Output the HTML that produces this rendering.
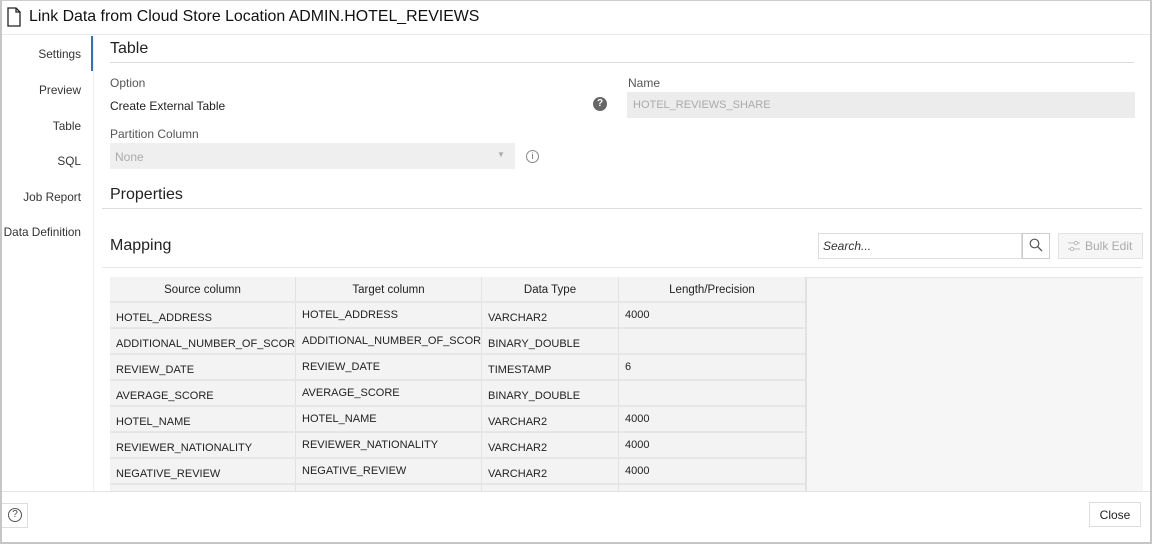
<!DOCTYPE html>
<html><head><style>
*{box-sizing:border-box;margin:0;padding:0}
body{width:1152px;height:544px;overflow:hidden;background:#fff;font-family:"Liberation Sans",sans-serif;color:#222;position:relative}
.frame{position:absolute;left:0;top:0;width:1152px;height:544px;border:2px solid #c6c6c6;border-top:1px solid #ccc}
.abs{position:absolute;white-space:nowrap}
.nav{font-size:11.8px;color:#333;text-align:right;width:81px;left:0}
.lbl{font-size:12px;color:#555}
.h{font-size:16px;color:#222}
.cell{position:absolute;background:#f3f3f3;border-right:1px solid #e2e2e2;border-bottom:2px solid #e6e6e6;font-size:11px;color:#222;padding:9px 6px 0 6px;overflow:hidden;white-space:nowrap}
.hd{text-align:center;padding-top:7px;font-size:11.5px}
#grid{position:absolute;left:0;top:0;width:1152px;height:491px;overflow:hidden}
</style></head><body>
<div class="frame"></div>
<svg class="abs" style="left:7px;top:7px" width="14" height="20" viewBox="0 0 14 20"><path d="M1 1h8l4 4v14H1z M9 1v4h4" fill="none" stroke="#222" stroke-width="1.3"/></svg>
<div class="abs" style="left:29px;top:8px;font-size:15.9px;color:#111">Link Data from Cloud Store Location ADMIN.HOTEL_REVIEWS</div>
<div class="abs" style="left:2px;top:34px;width:1148px;height:1px;background:#e8e8e8"></div>

<div class="abs nav" style="top:47px">Settings</div>
<div class="abs nav" style="top:83px">Preview</div>
<div class="abs nav" style="top:119px">Table</div>
<div class="abs nav" style="top:154px">SQL</div>
<div class="abs nav" style="top:190px">Job Report</div>
<div class="abs nav" style="top:225px">Data Definition</div>
<div class="abs" style="left:91px;top:36px;width:2px;height:35px;background:#3a6fb0"></div>
<div class="abs" style="left:93px;top:36px;width:1px;height:455px;background:#eee"></div>

<div class="abs h" style="left:110px;top:40px">Table</div>
<div class="abs" style="left:110px;top:62px;width:1024px;height:1px;background:#ddd"></div>
<div class="abs lbl" style="left:110px;top:76px">Option</div>
<div class="abs" style="left:110px;top:99px;font-size:12px">Create External Table</div>
<div class="abs lbl" style="left:110px;top:127px">Partition Column</div>
<div class="abs" style="left:110px;top:143px;width:405px;height:26px;background:#efefef"></div>
<div class="abs" style="left:115px;top:150px;font-size:12px;color:#aaa">None</div>
<div class="abs" style="left:497px;top:150px;font-size:8px;color:#aaa">▼</div>
<div class="abs" style="left:526px;top:150px;width:13px;height:13px;border:1px solid #888;border-radius:50%;font-size:9px;text-align:center;line-height:11px;color:#666">i</div>
<div class="abs" style="left:593px;top:97px;width:14px;height:14px;background:#666;border-radius:50%;font-size:10px;font-weight:bold;text-align:center;line-height:14px;color:#fff">?</div>
<div class="abs lbl" style="left:628px;top:76px">Name</div>
<div class="abs" style="left:627px;top:92px;width:508px;height:26px;background:#ececec"></div>
<div class="abs" style="left:633px;top:99px;font-size:11px;color:#aaa">HOTEL_REVIEWS_SHARE</div>

<div class="abs h" style="left:110px;top:186px">Properties</div>
<div class="abs" style="left:102px;top:208px;width:1040px;height:1px;background:#ddd"></div>
<div class="abs h" style="left:110px;top:237px">Mapping</div>
<div class="abs" style="left:102px;top:267px;width:1040px;height:1px;background:#e6e6e6"></div>
<div class="abs" style="left:818px;top:233px;width:204px;height:26px;border:1px solid #ddd;background:#fff"></div>
<div class="abs" style="left:823px;top:239px;font-size:12px;font-style:italic;color:#333">Search...</div>
<div class="abs" style="left:1022px;top:233px;width:28px;height:26px;border:1px solid #ccc;background:#fff"></div>
<svg class="abs" style="left:1029px;top:238px" width="14" height="14" viewBox="0 0 14 14"><circle cx="5.5" cy="5.5" r="4.3" fill="none" stroke="#555" stroke-width="1.2"/><path d="M8.7 8.7L13 13" stroke="#555" stroke-width="1.3"/></svg>
<div class="abs" style="left:1058px;top:233px;width:85px;height:26px;border:1px solid #e2e2e2;background:#f6f6f6"></div>
<svg class="abs" style="left:1067px;top:240px" width="14" height="12" viewBox="0 0 14 12"><path d="M1 3h12M1 9h12" stroke="#bbb"/><circle cx="9" cy="3" r="1.6" fill="#fff" stroke="#bbb"/><circle cx="5" cy="9" r="1.6" fill="#fff" stroke="#bbb"/></svg>
<div class="abs" style="left:1085px;top:239px;font-size:12px;color:#aaa">Bulk Edit</div>

<div class="abs" style="left:110px;top:277px;width:1033px;height:214px;background:#f6f6f6;border-top:1px solid #e6e6e6"></div>
<div class="abs" style="left:806px;top:277px;width:1px;height:214px;background:#e0e0e0"></div>
<div id="grid"></div>
<div class="abs" style="left:2px;top:491px;width:1148px;height:1px;background:#e2e2e2"></div>
<div class="abs" style="left:2px;top:503px;width:26px;height:25px;border:1px solid #ddd;border-left:none;background:#fff"></div>
<div class="abs" style="left:8px;top:508px;width:14px;height:14px;border:1px solid #555;border-radius:50%;font-size:10px;text-align:center;line-height:12px;color:#444">?</div>
<div class="abs" style="left:1089px;top:502px;width:52px;height:25px;border:1px solid #ddd;background:#fff;font-size:12px;text-align:center;line-height:25px;color:#222">Close</div>
<script>
var cols=[[110,186],[296,186],[482,137],[619,187]];
var rows=[["Source column","Target column","Data Type","Length/Precision"],
["HOTEL_ADDRESS","HOTEL_ADDRESS","VARCHAR2","4000"],
["ADDITIONAL_NUMBER_OF_SCORE","ADDITIONAL_NUMBER_OF_SCORE","BINARY_DOUBLE",""],
["REVIEW_DATE","REVIEW_DATE","TIMESTAMP","6"],
["AVERAGE_SCORE","AVERAGE_SCORE","BINARY_DOUBLE",""],
["HOTEL_NAME","HOTEL_NAME","VARCHAR2","4000"],
["REVIEWER_NATIONALITY","REVIEWER_NATIONALITY","VARCHAR2","4000"],
["NEGATIVE_REVIEW","NEGATIVE_REVIEW","VARCHAR2","4000"],
["","REVIEW_TOTAL_NEGATIVE_WORD_COUNTS","",""]];
var h="";
rows.forEach(function(r,i){var top=i==0?277:303+(i-1)*26;var ht=26;
r.forEach(function(t,j){var pad=(j==1||j==3)&&i>0?"padding-top:6px;":"";
h+='<div class="cell'+(i==0?' hd':'')+'" style="'+pad+'left:'+cols[j][0]+'px;top:'+top+'px;width:'+cols[j][1]+'px;height:'+ht+'px">'+t+'</div>';});});
document.getElementById("grid").innerHTML=h;
</script>
</body></html>
